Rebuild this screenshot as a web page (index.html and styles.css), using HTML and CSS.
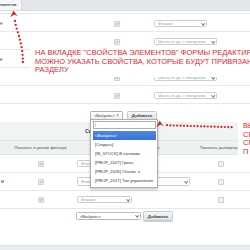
FILE: index.html
```html
<!DOCTYPE html>
<html lang="ru">
<head>
<meta charset="utf-8">
<link rel="stylesheet" href="styles.css">
</head>
<body>
<div class="page">
  <div class="tabs"><div class="tab">ементов</div></div>

  <div class="upper">
    <div class="urow"><span class="name">е</span><span class="cb on"></span><span class="sel w-flag">Флажки</span></div>
    <div class="urow"><span class="name"></span><span class="cb on"></span><span class="sel w-num">Число от-до, с ползунком</span></div>
    <div class="urow"><span class="name">е</span><span class="cb on"></span><span class="sel w-flag">Флажки</span></div>
    <div class="urow"><span class="name"></span><span class="cb on"></span><span class="sel w-num">Число от-до, с ползунком</span></div>
    <div class="urow"><span class="name"></span><span class="cb on"></span><span class="sel w-num">Число от-до, с ползунком</span></div>
  </div>

  <div class="add-row upper-add">
    <span class="csel">&lt;Выбрать&gt; <i>×</i></span>
    <span class="btn">Добавить</span>
  </div>

  <div class="heading">Свойства раздела</div>

  <div class="lhead">
    <span></span>
    <span class="hc">Показать в умном фильтре</span>
    <span class="hc">Вид в умном фильтре</span>
    <span class="hc">Показать развёрнутым</span>
    <span></span>
  </div>
  <div class="lrow"><span class="name"></span><span class="cb on"></span><span class="cell"><span class="sel lw-flag">Флажки</span></span><span class="cb"></span><span></span></div>
  <div class="lrow"><span class="name">м</span><span class="cb on"></span><span class="cell"><span class="sel lw-num">Флажки</span></span><span class="cb"></span><span></span></div>
  <div class="lrow"><span class="name"></span><span class="cb on"></span><span class="cell"><span class="sel lw-flag">Флажки</span></span><span class="cb"></span><span></span></div>

  <div class="add-row lower-add">
    <span class="sel plain">&lt;Выбрать&gt;</span>
    <span class="btn">Добавить</span>
  </div>

  <div class="spacer"></div>
  <div class="footer"></div>
</div>

<div class="chosen-drop">
  <div class="search">|</div>
  <ul class="results">
    <li class="hl">&lt;Выбрать&gt;</li>
    <li>[Создать]</li>
    <li>[IN_STOCK] В наличии</li>
    <li>[PROP_2027] Гриль</li>
    <li>[PROP_2026] Объем, л</li>
    <li>[PROP_2017] Тип управления</li>
  </ul>
</div>

<div class="note note-1">
  <div>НА ВКЛАДКЕ "СВОЙСТВА ЭЛЕМЕНТОВ" ФОРМЫ РЕДАКТИРОВАНИЯ</div>
  <div>МОЖНО УКАЗАТЬ СВОЙСТВА, КОТОРЫЕ БУДУТ ПРИВЯЗАНЫ К</div>
  <div>РАЗДЕЛУ</div>
</div>

<div class="note note-2">
  <div>ВЫБИРАЕМ</div>
  <div>СВОЙСТВО</div>
  <div>СПИСКА</div>
  <div>П</div>
</div>

<svg class="marks" width="250" height="250" viewBox="0 0 250 250">
  <g fill="#dc1c22">
    <path d="M10.3 17.2 L13.6 10.8 L17.6 16.2 L14.3 14.6 Z"/>
    <circle cx="15" cy="21" r="1.15"/>
    <circle cx="15.7" cy="24.8" r="1.15"/>
    <circle cx="16.7" cy="28.6" r="1.15"/>
    <circle cx="17.8" cy="32.3" r="1.15"/>
    <circle cx="18.9" cy="36" r="1.15"/>
    <circle cx="19.9" cy="39.7" r="1.15"/>
    <circle cx="20.8" cy="43.4" r="1.15"/>
    <circle cx="21.6" cy="47.2" r="1.15"/>
    <circle cx="22.2" cy="51" r="1.15"/>
    <circle cx="22.6" cy="54.8" r="1.15"/>
    <circle cx="22.8" cy="58.6" r="1.15"/>
    <circle cx="22.9" cy="62" r="1.15"/>

    <path d="M156.3 127.2 L159.6 120.8 L163.6 126.2 L160.3 124.6 Z"/>
    <circle cx="167" cy="125.2" r="1.1"/>
    <circle cx="170.4" cy="125.4" r="1.1"/>
    <circle cx="173.8" cy="125.5" r="1.1"/>
    <circle cx="177.2" cy="125.6" r="1.1"/>
    <circle cx="180.6" cy="125.7" r="1.1"/>
    <circle cx="184" cy="125.8" r="1.1"/>
    <circle cx="187.4" cy="125.9" r="1.1"/>
    <circle cx="190.8" cy="126" r="1.1"/>
    <circle cx="194.2" cy="126.1" r="1.1"/>
    <circle cx="197.6" cy="126.2" r="1.1"/>
    <circle cx="201" cy="126.3" r="1.1"/>
    <circle cx="204.4" cy="126.4" r="1.1"/>
    <circle cx="207.8" cy="126.5" r="1.1"/>
    <circle cx="211.2" cy="126.6" r="1.1"/>
    <circle cx="214.6" cy="126.7" r="1.1"/>
    <circle cx="218" cy="126.8" r="1.1"/>
    <circle cx="221.4" cy="126.9" r="1.1"/>
    <circle cx="224.8" cy="127" r="1.1"/>
    <circle cx="228.2" cy="127.1" r="1.1"/>
    <circle cx="231.6" cy="127.2" r="1.1"/>
  </g>
</svg>
</body>
</html>
```
FILE: styles.css
```css
html, body {
  margin: 0;
  padding: 0;
  width: 250px;
  height: 250px;
  overflow: hidden;
  background: #fff;
}
body {
  position: relative;
  font-family: "Liberation Sans", Arial, sans-serif;
  font-size: 4.5px;
  color: #333;
}
.page {
  display: flex;
  flex-direction: column;
  height: 250px;
}

/* tabs */
.tabs {
  height: 10px;
  flex: none;
  display: flex;
  background: #e3e7e9;
  border-bottom: 1px solid #d4dadd;
}
.tab {
  width: 22px;
  box-sizing: border-box;
  padding-right: 5px;
  background: #f5f6f6;
  border-right: 1px solid #d4dadd;
  font-size: 4px;
  font-weight: bold;
  color: #4a4f52;
  line-height: 10px;
  text-align: right;
  white-space: nowrap;
  overflow: hidden;
}

/* upper table */
.upper {
  margin-top: 2px;
  border-top: 1px solid #e6e9eb;
  flex: none;
}
.urow {
  display: grid;
  grid-template-columns: 96px 42px 1fr;
  align-items: center;
  padding-top: 2px;
  box-sizing: border-box;
  border-bottom: 1px solid #e6e9eb;
  height: 18px;
}
.name {
  font-size: 4.5px;
  color: #444;
  white-space: nowrap;
  overflow: hidden;
}
.cb {
  justify-self: center;
  width: 4px;
  height: 4px;
  border: 0.8px solid #c9cfd2;
  border-radius: 1px;
  background: #eef0f1;
  position: relative;
}
.cb.on::after {
  content: "";
  position: absolute;
  left: 1.3px;
  top: 0.2px;
  width: 1.1px;
  height: 2.2px;
  border-right: 0.7px solid #b3b9bc;
  border-bottom: 0.7px solid #b3b9bc;
  transform: rotate(45deg);
}
.sel {
  height: 7px;
  box-sizing: border-box;
  border: 0.8px solid #c9ced1;
  border-radius: 1.5px;
  background: #fff;
  font-size: 4px;
  color: #9a9fa2;
  padding: 0 2px 0 3px;
  display: flex;
  align-items: center;
  justify-content: space-between;
  white-space: nowrap;
  overflow: hidden;
}
.sel::after {
  content: "";
  flex: none;
  width: 1.5px;
  height: 1.5px;
  margin-top: -1px;
  border-right: 0.7px solid #6e7376;
  border-bottom: 0.7px solid #6e7376;
  transform: rotate(45deg);
}
.urow .sel { margin-left: 16px; }
.w-flag { width: 53px; }
.w-num { width: 63px; }

/* add rows */
.add-row {
  display: flex;
  align-items: center;
  flex: none;
}
.upper-add {
  height: 18px;
  padding: 4px 0 0 90px;
  box-sizing: border-box;
  gap: 4px;
}
.csel {
  width: 33px;
  height: 9px;
  box-sizing: border-box;
  border: 0.8px solid #aab0b3;
  border-radius: 1.5px;
  background: linear-gradient(#fff, #f1f1f1);
  font-size: 4px;
  color: #444;
  display: flex;
  align-items: center;
  justify-content: space-between;
  padding: 0 3px;
}
.csel i {
  font-style: normal;
  color: #777;
  font-size: 4.5px;
}
.btn {
  width: 30px;
  height: 9px;
  box-sizing: border-box;
  border: 0.8px solid #c3cacd;
  border-radius: 1.5px;
  background: linear-gradient(#f6f7f7, #dde2e4);
  box-shadow: 0 0.8px 0 #b8c0c3;
  font-size: 4.2px;
  font-weight: bold;
  color: #3b4144;
  display: flex;
  align-items: center;
  justify-content: center;
}

/* heading */
.heading {
  height: 18px;
  flex: none;
  line-height: 18px;
  padding-left: 85px;
  background: #f1f4f5;
  font-size: 5px;
  font-weight: bold;
  color: #3d4a4f;
  white-space: nowrap;
}

/* lower table */
.lhead, .lrow {
  display: grid;
  grid-template-columns: 4px 73px 123px 42px 1fr;
  align-items: center;
  flex: none;
}
.lhead {
  height: 15px;
  background: #eef1f2;
  border-top: 1px solid #e3e7e9;
  border-bottom: 1px solid #dfe4e6;
  box-sizing: border-box;
}
.hc {
  text-align: center;
  font-size: 4.2px;
  color: #4d5357;
  white-space: nowrap;
  overflow: visible;
}
.lrow {
  height: 18px;
  box-sizing: border-box;
  border-bottom: 1px solid #e6e9eb;
}
.lrow:first-of-type { height: 17px; }
.lrow .name { direction: rtl; }
.cell { display: flex; }
.lw-flag { width: 55px; }
.lw-num { width: 113px; height: 9px; }
.lower-add {
  height: 14px;
  padding-left: 76px;
  gap: 2px;
}
.lower-add .sel {
  width: 65px;
  height: 8px;
  color: #333;
  border-color: #b4babd;
}
.lower-add .btn { height: 10px; }
.spacer { flex: 1; }
.footer {
  height: 4px;
  flex: none;
  background: #e8ecee;
  border-top: 1px solid #dde2e4;
}

/* chosen dropdown (overlay) */
.chosen-drop {
  position: absolute;
  left: 90px;
  top: 119px;
  width: 68px;
  height: 69px;
  box-sizing: border-box;
  background: #fff;
  border: 0.8px solid #a9afb2;
  box-shadow: 0 2px 3px rgba(0, 0, 0, 0.2);
  padding: 1px 1px 0 2px;
}
.search {
  height: 8px;
  box-sizing: border-box;
  border: 0.8px solid #a9afb2;
  font-size: 4px;
  line-height: 6.5px;
  padding-left: 1px;
  color: #555;
}
.results {
  list-style: none;
  margin: 2px 0 0;
  padding: 0;
}
.results li {
  height: 9px;
  line-height: 9px;
  padding-left: 2px;
  font-size: 4.2px;
  color: #333;
  white-space: nowrap;
  overflow: hidden;
}
.results li.hl {
  background: linear-gradient(#4a88e6, #3a72d2);
  color: #fff;
}

/* annotations (overlay) */
.note {
  position: absolute;
  background: #fff;
  color: #e0262c;
  font-size: 7.5px;
  line-height: 8.5px;
  white-space: nowrap;
  overflow: hidden;
  box-sizing: border-box;
}
.note-1 {
  left: 30px;
  top: 46px;
  width: 240px;
  height: 31px;
  padding: 3px 0 0 5px;
}
.note-2 {
  left: 238px;
  top: 118px;
  width: 40px;
  height: 40px;
  padding: 4px 0 0 5px;
}
.marks {
  position: absolute;
  left: 0;
  top: 0;
  pointer-events: none;
}
```
